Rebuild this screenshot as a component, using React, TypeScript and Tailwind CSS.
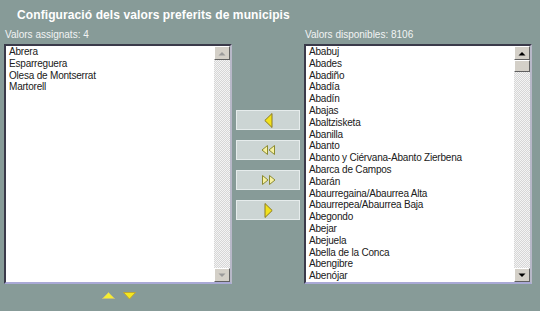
import React from "react";

const assigned = ["Abrera", "Esparreguera", "Olesa de Montserrat", "Martorell"];
const available = [
  "Ababuj",
  "Abades",
  "Abadiño",
  "Abadía",
  "Abadín",
  "Abajas",
  "Abaltzisketa",
  "Abanilla",
  "Abanto",
  "Abanto y Ciérvana-Abanto Zierbena",
  "Abarca de Campos",
  "Abarán",
  "Abaurregaina/Abaurrea Alta",
  "Abaurrepea/Abaurrea Baja",
  "Abegondo",
  "Abejar",
  "Abejuela",
  "Abella de la Conca",
  "Abengibre",
  "Abenójar",
];

function ScrollBtn({ dir, enabled }: { dir: "up" | "down"; enabled: boolean }) {
  return (
    <div className="w-[16px] h-[14px] bg-[#d4d0c8] border-t border-l border-t-[#ffffff] border-l-[#ffffff] border-b border-r border-b-[#606060] border-r-[#606060] flex items-center justify-center">
      <svg width="8" height="5" viewBox="0 0 8 5">
        {dir === "up" ? (
          <polygon points="0.5,4.5 4,1 7.5,4.5" fill={enabled ? "#000" : "#9a9a9a"} />
        ) : (
          <polygon points="0.5,0.5 4,4 7.5,0.5" fill={enabled ? "#000" : "#9a9a9a"} />
        )}
      </svg>
    </div>
  );
}

function ListBox({ items, scrollable }: { items: string[]; scrollable: boolean }) {
  return (
    <div className="h-[240px] w-[228px] bg-white border-t-2 border-l-2 border-t-[#3a3a4a] border-l-[#3a3a4a] border-b-2 border-r-2 border-b-[#a9a9d6] border-r-[#b8b8c8] flex">
      <div className="flex-1 pl-[3px] overflow-hidden">
        {items.map((it) => (
          <div key={it} className="text-[10px] leading-[11.8px] tracking-[-0.2px] text-[#202020] whitespace-nowrap">
            {it}
          </div>
        ))}
      </div>
      <div className="w-[16px] flex flex-col bg-[repeating-conic-gradient(#d6d6d6_0%_25%,#f4f4f4_0%_50%)] bg-[length:2px_2px]">
        <ScrollBtn dir="up" enabled={scrollable} />
        {scrollable && (
          <div className="w-[16px] h-[12px] bg-[#d4d0c8] border-t border-l border-t-[#ffffff] border-l-[#ffffff] border-b border-r border-b-[#606060] border-r-[#606060]" />
        )}
        <div className="flex-1" />
        <ScrollBtn dir="down" enabled={scrollable} />
      </div>
    </div>
  );
}

function MoveBtn({ children }: { children: React.ReactNode }) {
  return (
    <div className="h-[20px] w-[64px] bg-[#ccd5d4] border border-[#e6ecec] flex items-center justify-center">
      {children}
    </div>
  );
}

export default function App() {
  const font = { fontFamily: '"Liberation Sans", Arial, sans-serif' };
  return (
    <div className="w-[540px] h-[311px] bg-[#879b98] overflow-hidden" style={font}>
      <div className="h-[28px] pt-[7px] pl-[17px] text-[12px] leading-[16px] font-bold tracking-[0.1px] text-white">
        Configuració dels valors preferits de municipis
      </div>
      <div className="flex pl-[4px] gap-[4px]">
        <div className="w-[228px] flex flex-col">
          <div className="h-[16px] pl-[1px] text-[10px] leading-[13px] text-[#f2f4f4]">Valors assignats: 4</div>
          <ListBox items={assigned} scrollable={false} />
          <div className="flex justify-center gap-[8px] mt-[8px] pl-[2px]">
            <svg width="13" height="7" viewBox="0 0 13 7">
              <polygon points="0.5,6.5 6.5,0.5 12.5,6.5" fill="#f4ee30" stroke="#c8c070" strokeWidth="1" />
            </svg>
            <svg width="13" height="8" viewBox="0 0 13 8">
              <polygon points="0.5,0.5 6.5,7 12.5,0.5" fill="#f4e820" stroke="#c0a830" strokeWidth="1" />
            </svg>
          </div>
        </div>
        <div className="w-[64px] flex flex-col pt-[82px] gap-[10px]">
          <MoveBtn>
            <svg width="9" height="15" viewBox="0 0 9 15">
              <polygon points="8,0.5 8,14.5 0.8,7.5" fill="#f2e21c" stroke="#8a7a20" strokeWidth="1" />
            </svg>
          </MoveBtn>
          <MoveBtn>
            <svg width="15" height="10" viewBox="0 0 15 10">
              <polygon points="6.5,0.5 6.5,9.5 1,5" fill="#f6f0a0" stroke="#8a8a30" strokeWidth="1" />
              <polygon points="13.5,0.5 13.5,9.5 8,5" fill="#f6f0a0" stroke="#8a8a30" strokeWidth="1" />
            </svg>
          </MoveBtn>
          <MoveBtn>
            <svg width="15" height="10" viewBox="0 0 15 10">
              <polygon points="1.5,0.5 1.5,9.5 7,5" fill="#f6f0a0" stroke="#8a8a30" strokeWidth="1" />
              <polygon points="8.5,0.5 8.5,9.5 14,5" fill="#f6f0a0" stroke="#8a8a30" strokeWidth="1" />
            </svg>
          </MoveBtn>
          <MoveBtn>
            <svg width="9" height="15" viewBox="0 0 9 15">
              <polygon points="1,0.5 1,14.5 8.2,7.5" fill="#f2e21c" stroke="#8a7a20" strokeWidth="1" />
            </svg>
          </MoveBtn>
        </div>
        <div className="w-[228px] flex flex-col">
          <div className="h-[16px] pl-[1px] text-[10px] leading-[13px] text-[#f2f4f4]">Valors disponibles: 8106</div>
          <ListBox items={available} scrollable={true} />
        </div>
      </div>
    </div>
  );
}
